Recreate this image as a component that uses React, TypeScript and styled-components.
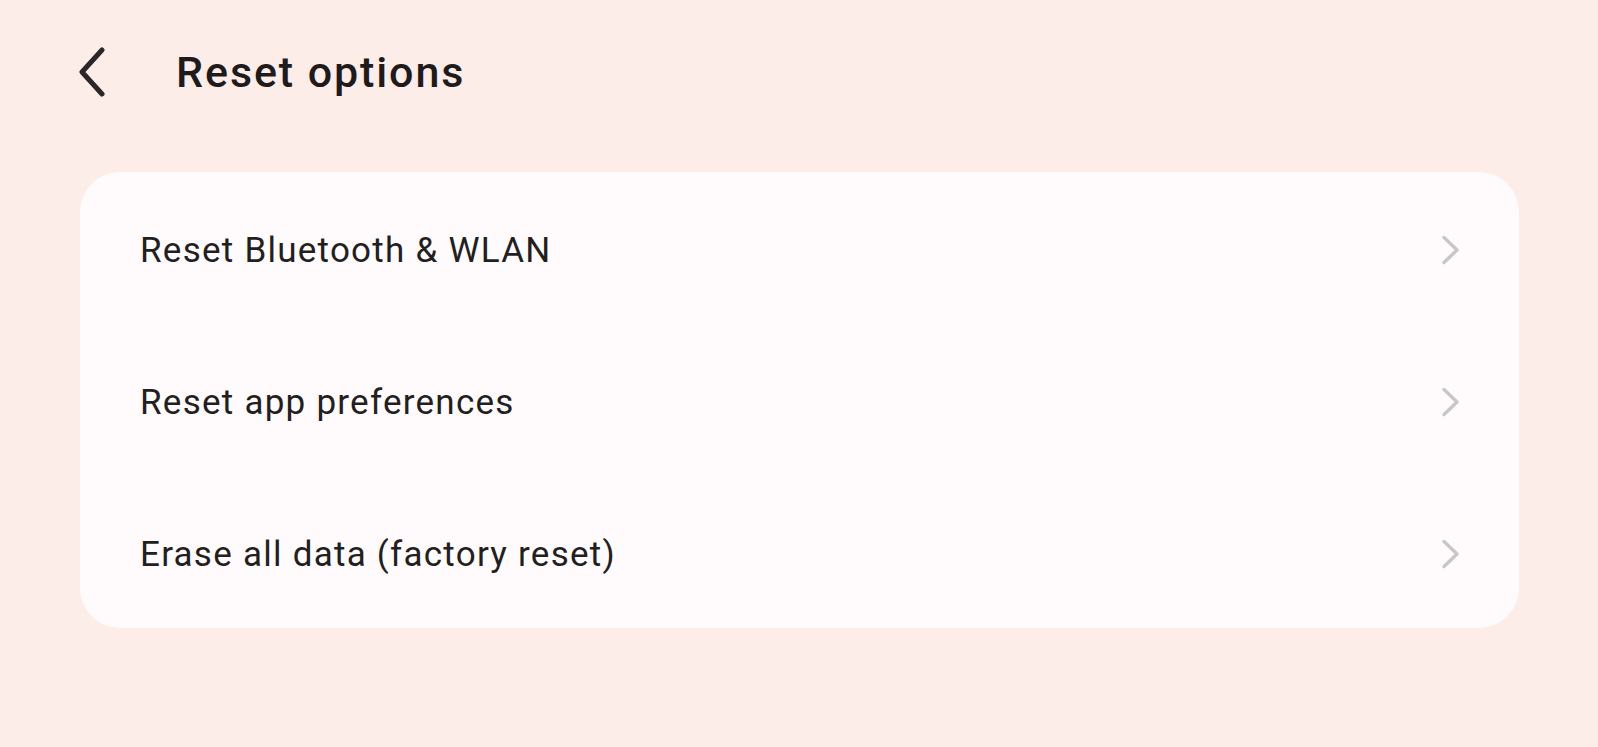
import styled, { createGlobalStyle } from "styled-components";

const GlobalStyle = createGlobalStyle`
  html, body {
    margin: 0;
    padding: 0;
    background: #fdede8;
  }
  body {
    font-family: Roboto, "Noto Sans", sans-serif;
    color: #231f20;
  }
`;

const Page = styled.div`
  min-height: 747px;
  padding: 0 79px 0 80px;
  box-sizing: border-box;
`;

const Header = styled.header`
  display: flex;
  align-items: center;
  height: 144px;
  padding-bottom: 28px;
  box-sizing: content-box;
`;

const BackButton = styled.button`
  display: flex;
  align-items: center;
  justify-content: center;
  width: 30px;
  height: 50px;
  margin-left: -3px;
  padding: 0;
  border: none;
  background: none;
  color: #2b2728;
  cursor: pointer;
`;

const Title = styled.h1`
  margin: 0 0 0 69px;
  font-size: 43px;
  font-weight: 500;
  letter-spacing: 1.9px;
  color: #1f1b1c;
`;

const Card = styled.section`
  display: flex;
  flex-direction: column;
  background: #fffbfd;
  border-radius: 40px;
  overflow: hidden;
`;

const Row = styled.div`
  display: flex;
  align-items: center;
  justify-content: space-between;
  height: 152px;
  padding: 4px 58px 0 60px;
  box-sizing: border-box;
  cursor: pointer;
`;

const Label = styled.span`
  font-size: 35px;
  font-weight: 400;
  letter-spacing: 1.25px;
`;

const Chevron = styled.svg`
  color: #c9c6c7;
`;

const items = [
  "Reset Bluetooth & WLAN",
  "Reset app preferences",
  "Erase all data (factory reset)",
];

export default function App() {
  return (
    <>
      <GlobalStyle />
      <Page>
        <Header>
          <BackButton aria-label="Back">
            <svg width="30" height="50" viewBox="0 0 30 50" fill="none">
              <path
                d="M25 3 L5 25 L25 47"
                stroke="currentColor"
                strokeWidth="5"
                strokeLinecap="round"
                strokeLinejoin="round"
              />
            </svg>
          </BackButton>
          <Title>Reset options</Title>
        </Header>
        <Card>
          {items.map((item) => (
            <Row key={item}>
              <Label>{item}</Label>
              <Chevron width="20" height="30" viewBox="0 0 20 30" fill="none">
                <path
                  d="M3 2.5 L16 15 L3 27.5"
                  stroke="currentColor"
                  strokeWidth="3.4"
                  strokeLinecap="round"
                  strokeLinejoin="round"
                />
              </Chevron>
            </Row>
          ))}
        </Card>
      </Page>
    </>
  );
}
